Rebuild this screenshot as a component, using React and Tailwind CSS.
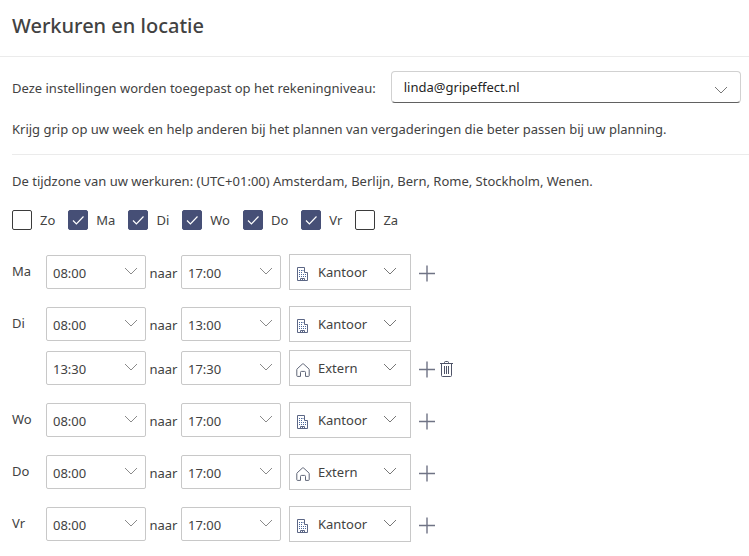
import { useState } from 'react';

const TIMES = ['08:00', '13:00', '13:30', '17:00', '17:30'];

const DAYS = ['Zo', 'Ma', 'Di', 'Wo', 'Do', 'Vr', 'Za'];

const SCHEDULE = [
  { day: 'Ma', slots: [{ from: '08:00', to: '17:00', place: 'Kantoor' }] },
  {
    day: 'Di',
    slots: [
      { from: '08:00', to: '13:00', place: 'Kantoor' },
      { from: '13:30', to: '17:30', place: 'Extern' },
    ],
  },
  { day: 'Wo', slots: [{ from: '08:00', to: '17:00', place: 'Kantoor' }] },
  { day: 'Do', slots: [{ from: '08:00', to: '17:00', place: 'Extern' }] },
  { day: 'Vr', slots: [{ from: '08:00', to: '17:00', place: 'Kantoor' }] },
];

function Chevron({ className }) {
  return (
    <svg viewBox="0 0 14 8" className={`pointer-events-none absolute h-2 w-3.5 ${className}`} fill="none" stroke="currentColor">
      <path d="M1 1l6 6 6-6" />
    </svg>
  );
}

function OfficeIcon() {
  return (
    <svg viewBox="0 0 14 16" className="h-4 w-3.5" fill="none" stroke="#5b6685">
      <path d="M1.5 14.5v-13h7v5h3v8z" strokeLinejoin="round" />
      <path d="M4.5 14.5v-2h4v2M6.5 12.5v2" />
      <path d="M3 4.5h1M5 4.5h1M6.5 4.5h1M3 6.5h1M5 6.5h1M3 8.5h1M5 8.5h1M7 8.5h1M9 8.5h1M3 10.5h1M5 10.5h1M7 10.5h1M9 10.5h1" stroke="#4a679c" />
    </svg>
  );
}

function HomeIcon() {
  return (
    <svg viewBox="0 0 14 16" className="h-4 w-3.5" fill="none" stroke="#5f6577" strokeLinejoin="round">
      <path d="M.8 13.7V7.6a1 1 0 0 1 .3-.7L6.3 2.1a1 1 0 0 1 1.4 0l5.2 4.8a1 1 0 0 1 .3.7v6.1a.7.7 0 0 1-.7.7H9.5v-4a1 1 0 0 0-1-1h-3a1 1 0 0 0-1 1v4H1.5a.7.7 0 0 1-.7-.7z" />
    </svg>
  );
}

function TimeSelect({ label, value }) {
  return (
    <div className="relative w-[100px]">
      <select
        aria-label={label}
        defaultValue={value}
        className="h-[34px] w-full appearance-none rounded-xs border border-[#c8c8c8] bg-white pt-0.5 pl-1.5"
      >
        {TIMES.map((t) => (
          <option key={t}>{t}</option>
        ))}
      </select>
      <Chevron className="top-3 right-2 text-[#8a8a8a]" />
    </div>
  );
}

function PlaceSelect({ label, value }) {
  const [place, setPlace] = useState(value);
  return (
    <div className="relative ml-2 w-[122px]">
      <select
        aria-label={label}
        value={place}
        onChange={(e) => setPlace(e.target.value)}
        className="h-9 w-full appearance-none border border-[#c8c8c8] bg-white pl-7"
      >
        <option>Kantoor</option>
        <option>Extern</option>
      </select>
      <span className="pointer-events-none absolute top-3 left-[7px]">
        {place === 'Kantoor' ? <OfficeIcon /> : <HomeIcon />}
      </span>
      <Chevron className="top-[13px] right-3.5 text-[#777]" />
    </div>
  );
}

function SlotRow({ day, slot, isLast, removable }) {
  return (
    <div className="flex h-9 items-center">
      <TimeSelect label={`${day} van`} value={slot.from} />
      <span className="w-[35px] pt-0.5 text-center">naar</span>
      <TimeSelect label={`${day} tot`} value={slot.to} />
      <PlaceSelect label={`${day} locatie`} value={slot.place} />
      {isLast && (
        <button type="button" aria-label="Tijd toevoegen" className="ml-2 pt-0.5">
          <svg viewBox="0 0 17 17" className="size-[17px]" stroke="#6f7385" strokeWidth="1.4">
            <path d="M8 .5v16M0 8.5h16" />
          </svg>
        </button>
      )}
      {removable && (
        <button type="button" aria-label="Tijd verwijderen" className="ml-1 pt-0.5">
          <svg viewBox="0 0 14 17" className="h-[17px] w-3.5" fill="none" stroke="#4f5468">
            <path d="M0 2.5h13M4.5 2.5v-1a1 1 0 0 1 1-1h2a1 1 0 0 1 1 1v1M1.5 2.5v12a1 1 0 0 0 1 1h8a1 1 0 0 0 1-1v-12" />
            <path d="M4.5 5v8M6.5 5v8M8.5 5v8" />
          </svg>
        </button>
      )}
    </div>
  );
}

function DayCheckbox({ day, checked }) {
  return (
    <label className="flex items-center gap-2">
      <span className="relative size-5">
        <input
          type="checkbox"
          defaultChecked={checked}
          className="peer block size-5 appearance-none rounded-xs border border-[#3b3b3b] bg-white checked:border-[#464f76] checked:bg-[#464f76]"
        />
        <svg
          viewBox="0 0 20 20"
          className="pointer-events-none absolute inset-0 hidden size-5 peer-checked:block"
          fill="none"
          stroke="#fff"
          strokeWidth="1.2"
        >
          <path d="M5 10.5l3.4 3.4L15.5 6.5" />
        </svg>
      </span>
      {day}
    </label>
  );
}

export default function App() {
  return (
    <main className="bg-white font-['Noto_Sans',sans-serif] text-[13px] leading-5 text-[#424242]">
      <header className="border-b border-[#ebebeb] pt-3 pr-3 pb-4 pl-3">
        <h1 className="text-[20px] leading-7 font-medium">Werkuren en locatie</h1>
      </header>

      <section className="pt-3.5 pl-3">
        <div className="flex items-center gap-[15px] pr-2">
          <label htmlFor="account" className="shrink-0 pt-0.5">
            Deze instellingen worden toegepast op het rekeningniveau:
          </label>
          <div className="relative flex-1">
            <select
              id="account"
              className="block h-8 w-full appearance-none rounded border border-[#d1d1d1] border-b-[#616161] bg-white pl-3 text-[#242424]"
            >
              <option>linda@gripeffect.nl</option>
            </select>
            <Chevron className="top-[15px] right-[13px] text-[#777]" />
          </div>
        </div>
        <p className="border-b border-[#ebebeb] pt-4 pb-[15px]">
          Krijg grip op uw week en help anderen bij het plannen van vergaderingen die beter passen bij uw planning.
        </p>
      </section>

      <section className="px-3 pt-4 pb-3.5">
        <p>De tijdzone van uw werkuren: (UTC+01:00) Amsterdam, Berlijn, Bern, Rome, Stockholm, Wenen.</p>
        <div className="mt-[19px] flex gap-[13px]">
          {DAYS.map((day) => (
            <DayCheckbox key={day} day={day} checked={SCHEDULE.some((s) => s.day === day)} />
          ))}
        </div>

        <div className="mt-6 space-y-4">
          {SCHEDULE.map(({ day, slots }) => (
            <div key={day} className="flex">
              <span className="w-[34px] pt-[7px]">{day}</span>
              <div className="space-y-2">
                {slots.map((slot, i) => (
                  <SlotRow
                    key={slot.from}
                    day={day}
                    slot={slot}
                    isLast={i === slots.length - 1}
                    removable={i > 0}
                  />
                ))}
              </div>
            </div>
          ))}
        </div>
      </section>
    </main>
  );
}
